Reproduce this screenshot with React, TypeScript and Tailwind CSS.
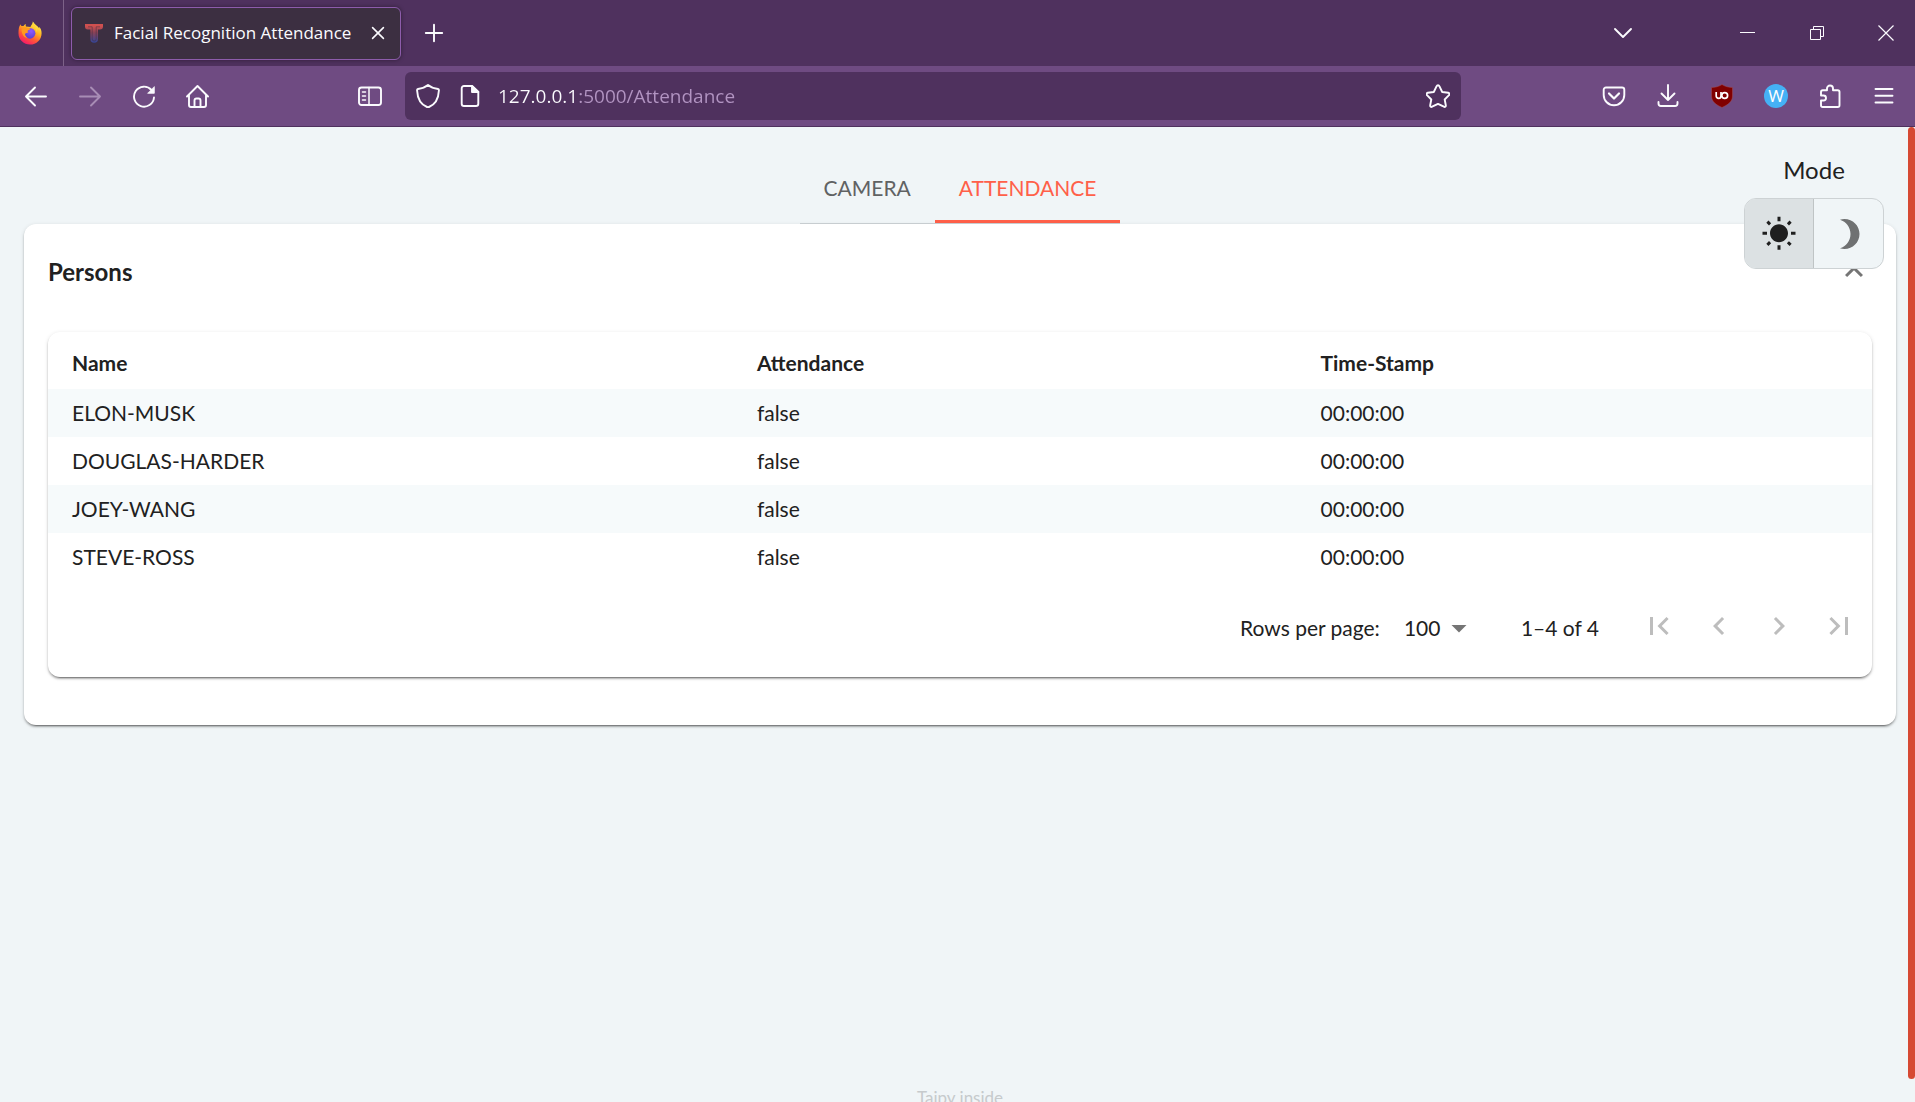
import React, { useState } from "react";

const people = [
  { name: "ELON-MUSK", attendance: "false", time: "00:00:00" },
  { name: "DOUGLAS-HARDER", attendance: "false", time: "00:00:00" },
  { name: "JOEY-WANG", attendance: "false", time: "00:00:00" },
  { name: "STEVE-ROSS", attendance: "false", time: "00:00:00" },
];

type LineProps = { children: React.ReactNode; className?: string };

function Line({ children, className = "size-6" }: LineProps) {
  return (
    <svg
      viewBox="0 0 24 24"
      className={className}
      fill="none"
      stroke="currentColor"
      strokeWidth="1.9"
      strokeLinecap="round"
      strokeLinejoin="round"
      aria-hidden="true"
    >
      {children}
    </svg>
  );
}

function Solid({ d, className = "size-9" }: { d: string; className?: string }) {
  return (
    <svg viewBox="0 0 24 24" className={className} fill="currentColor" aria-hidden="true">
      <path d={d} />
    </svg>
  );
}

function ToolButton({ label, children, disabled }: { label: string; children: React.ReactNode; disabled?: boolean }) {
  return (
    <button
      type="button"
      aria-label={label}
      disabled={disabled}
      className="flex h-12 w-[54px] shrink-0 items-center justify-center rounded-md text-[#fbfbfe] disabled:text-[#a88db5]"
    >
      {children}
    </button>
  );
}

function FirefoxLogo() {
  return (
    <svg viewBox="0 0 24 24" className="size-6" aria-hidden="true">
      <defs>
        <linearGradient id="fx-body" x1="0.8" y1="0.1" x2="0.3" y2="1">
          <stop offset="0" stopColor="#fff44f" />
          <stop offset="0.35" stopColor="#ffb021" />
          <stop offset="0.65" stopColor="#ff5a36" />
          <stop offset="1" stopColor="#f5156c" />
        </linearGradient>
        <radialGradient id="fx-globe" cx="0.6" cy="0.3" r="0.7">
          <stop offset="0" stopColor="#9059ff" />
          <stop offset="1" stopColor="#5b3fd0" />
        </radialGradient>
      </defs>
      <path
        fill="url(#fx-body)"
        d="M14.8.4c.3 1.6-.5 2.7-1.3 3.6-.6.8-1 1.3-1 2L8 5.4C7.600 4.600 7.600 3.700 7.900 3 6.900 3.400 6 4.200 5.500 5c-.8-.1-1.600 0-2 .1C2.900 4.600 2.600 3.800 2.600 3.200 1 5 .4 8.500.5 12.500A11.500 11.300 0 0 0 12 23.600c6.500 0 11.600-5 11.600-11.400 0-2.500-.8-5-2.600-6.400.2.700.3 1.300.3 1.800C20 4.500 16.500 3.600 14.800.4z"
      />
      <circle cx="12" cy="12.300" r="5.400" fill="url(#fx-globe)" />
      <path
        fill="#ff9a1f"
        d="M3.600 8.500C4.800 6 8 5.600 9.600 7c1 .1 2.400.1 2.800.5-.2 1-1.500 1.500-2.600 2-.4 1 .1 1.700.8 2.100-1.600.7-3.400.2-3.600 1.700-.1 1.200 1 2.600 2.600 3.400-3 .5-6-2.800-6-8.200z"
      />
      <path fill="#ffd43a" d="M14.800.4c.3 1.600-.5 2.700-1.300 3.600 2.500 1 4.800 3.600 5 7 1-1.500.8-3 .5-4.500C17.400 4.500 15.600 3 14.800.4z" />
    </svg>
  );
}

function TaipyMark() {
  return (
    <svg viewBox="0 0 24 24" className="size-6" aria-hidden="true">
      <defs>
        <linearGradient id="taipy-mark" x1="0" y1="0" x2="0" y2="1">
          <stop offset="0.1" stopColor="#d0504f" />
          <stop offset="0.45" stopColor="#8a4256" />
          <stop offset="1" stopColor="#33459a" />
        </linearGradient>
      </defs>
      <path fill="url(#taipy-mark)" d="M3 3h18v2.500a3 3 0 0 1-3 3h-2V18a3.800 3.800 0 0 1-7.600 0V8.500H6.300A3 3 0 0 1 3 5.500z" />
      <path fill="none" stroke="#3a3040" strokeWidth="0.500" d="M6 5.800h4.200V18a2 2 0 0 0 4 0V5.800H18" />
    </svg>
  );
}

function TitleBar() {
  return (
    <header className="flex h-[66px] shrink-0 items-center bg-[#4f315e] text-[#fbfbfe]">
      <div className="flex h-full w-16 shrink-0 items-center justify-center border-r border-[#7d6288] pr-1">
        <FirefoxLogo />
      </div>
      <div className="ml-[7px] flex h-[53px] w-[330px] shrink-0 items-center rounded-md border border-[#8d5cab] bg-[#3c2f41] pl-2.5 shadow-[0_0_4px_rgba(0,0,0,0.4)]">
        <TaipyMark />
        <span className="ml-2 flex-1 whitespace-nowrap font-['Open_Sans',sans-serif] text-[17px] leading-6">
          Facial Recognition Attendance
        </span>
        <button type="button" aria-label="Close tab" className="mr-1 flex size-9 items-center justify-center">
          <Line className="size-5">
            <path d="M5.500 5.500l13 13M18.500 5.500l-13 13" />
          </Line>
        </button>
      </div>
      <button type="button" aria-label="New tab" className="ml-[9px] flex size-12 items-center justify-center">
        <Line>
          <path d="M12 3.800v16.400M3.800 12h16.400" />
        </Line>
      </button>
      <div className="flex-1" />
      <button type="button" aria-label="List all tabs" className="mr-[66px] flex size-12 items-center justify-center">
        <Line>
          <path d="M4 8l8 8 8-8" />
        </Line>
      </button>
      <button type="button" aria-label="Minimize" className="flex h-full w-[69px] items-center justify-center">
        <svg viewBox="0 0 16 16" className="size-4" fill="none" stroke="currentColor" aria-hidden="true">
          <path d="M0 7.500h15" />
        </svg>
      </button>
      <button type="button" aria-label="Restore" className="flex h-full w-[69px] items-center justify-center">
        <svg viewBox="0 0 16 16" className="size-4" fill="none" stroke="currentColor" aria-hidden="true">
          <path d="M1.500 4.500h10v10h-10zM4.500 4.500v-3h10v10h-3" />
        </svg>
      </button>
      <button type="button" aria-label="Close" className="flex h-full w-16 items-center justify-center pl-1.5">
        <svg viewBox="0 0 16 16" className="size-4" fill="none" stroke="currentColor" strokeWidth="1.200" aria-hidden="true">
          <path d="M.5.500l15 15M15.500.500l-15 15" />
        </svg>
      </button>
    </header>
  );
}

function NavBar() {
  return (
    <nav
      aria-label="Browser toolbar"
      className="flex h-[61px] shrink-0 items-center border-b border-[#4f315e] bg-[#6f4b82] pl-[9px] pr-1 text-[#fbfbfe]"
    >
      <ToolButton label="Back">
        <Line>
          <path d="M22 12.500H2M11 3.500l-9 9 9 9" />
        </Line>
      </ToolButton>
      <ToolButton label="Forward" disabled>
        <Line>
          <path d="M2 12.500h20M13 3.500l9 9-9 9" />
        </Line>
      </ToolButton>
      <ToolButton label="Reload">
        <Line>
          <path d="M22 13.500A10 10 0 1 1 19.500 6" />
          <path d="M22.300 3v6.300H16z" fill="currentColor" strokeWidth="0.800" />
        </Line>
      </ToolButton>
      <ToolButton label="Home">
        <Line>
          <path d="M1 12.500L11.500 2 22 12.500M3 11v10a2 2 0 0 0 2 2h13a2 2 0 0 0 2-2V11" />
          <path d="M8.500 23v-6.500a2 2 0 0 1 2-2h2a2 2 0 0 1 2 2V23" />
        </Line>
      </ToolButton>
      <div className="w-[118px] shrink-0" />
      <ToolButton label="Sidebars">
        <Line>
          <rect x="1" y="3.500" width="22" height="17.500" rx="2.500" />
          <path d="M11 3.500V21" strokeWidth="1.500" />
          <path d="M4.500 8h3M4.500 12h3M4.500 16h3" strokeWidth="1.500" />
        </Line>
      </ToolButton>
      <div className="ml-2 flex h-12 min-w-0 flex-1 items-center rounded-md bg-[#4f315e] px-[11px]">
        <button type="button" aria-label="Tracking protection">
          <Line>
            <path d="M12 1C9 3.500 5.500 4.500 2 5c-.8.200-1 .800-.9 1.500C1.500 15 5 21 12 23.500 19 21 22.500 15 22.900 6.500 23 5.800 22.800 5.200 22 5 18.500 4.500 15 3.500 12 1z" />
          </Line>
        </button>
        <button type="button" aria-label="Site information" className="ml-[18px]">
          <Line>
            <path d="M14 2H6a2.300 2.300 0 0 0-2.300 2.300v15.400A2.300 2.300 0 0 0 6 22h12a2.300 2.300 0 0 0 2.300-2.300V8z" />
            <path d="M14 2v6h6.300z" fill="currentColor" />
          </Line>
        </button>
        <input
          aria-label="Address"
          type="text"
          defaultValue="127.0.0.1:5000/Attendance"
          className="ml-4 h-9 min-w-0 flex-1 bg-[linear-gradient(to_right,#fbfbfe_80px,#b294c2_80px)] bg-clip-text font-['Open_Sans',sans-serif] text-[19px] text-transparent outline-none"
        />
        <button type="button" aria-label="Bookmark this page">
          <Line>
            <path d="M12 1.300c.7 0 1.200.400 1.500 1L16.200 8l6 .800c1.200.200 1.600 1.500.8 2.300L18.700 15.500l1.100 5.800c.2 1.200-.9 2-1.900 1.400L12 19.900l-5.900 2.800c-1 .600-2.100-.200-1.900-1.400l1.100-5.800L1 11.100c-.8-.800-.4-2.100.8-2.300l6-.800 2.700-5.700c.3-.600.8-1 1.500-1z" />
          </Line>
        </button>
      </div>
      <div className="w-[126px] shrink-0" />
      <ToolButton label="Save to Pocket">
        <Line>
          <path d="M4 3.500h16a2.300 2.300 0 0 1 2.300 2.300V11a10.300 10.300 0 0 1-20.600 0V5.800A2.300 2.300 0 0 1 4 3.500z" />
          <path d="M7 9.500l5 5 5-5" strokeWidth="2.200" />
        </Line>
      </ToolButton>
      <ToolButton label="Downloads">
        <Line>
          <path d="M12 1v15M5.500 9.500L12 16l6.500-6.500M2.500 18v1.500A2.500 2.500 0 0 0 5 22h14a2.500 2.500 0 0 0 2.500-2.500V18" />
        </Line>
      </ToolButton>
      <ToolButton label="uBlock Origin">
        <svg viewBox="0 0 24 24" className="size-6" aria-hidden="true">
          <path fill="#800000" stroke="#a0505a" strokeWidth="0.500" d="M12 .5C9 2.500 5 3.500 1.500 3.500V12c0 6 5 9 10.500 11.500C17.500 21 22.500 18 22.500 12V3.500C19 3.500 15 2.500 12 .5z" />
          <path fill="none" stroke="#fff" strokeWidth="1.700" d="M6.200 8v4a2.400 2.400 0 0 0 2.400 2.400c1.500 0 2.400-1.100 2.400-2.400V8" />
          <circle cx="14.700" cy="11.500" r="2.900" fill="none" stroke="#fff" strokeWidth="1.700" />
        </svg>
      </ToolButton>
      <ToolButton label="Account W">
        <span className="flex size-6 items-center justify-center rounded-full bg-[#45b1f5] font-['Open_Sans',sans-serif] text-[17px] leading-6 text-white">
          W
        </span>
      </ToolButton>
      <ToolButton label="Extensions">
        <Line>
          <path d="M3 9.500V8a1.800 1.800 0 0 1 1.800-1.800h4.200V4.500a3 3 0 0 1 6 0v1.700h4.700A1.800 1.800 0 0 1 21.500 8v13.200a1.800 1.800 0 0 1-1.800 1.800H4.800A1.800 1.800 0 0 1 3 21.200v-4.700h2.500a2.500 2.500 0 0 0 0-5H3z" />
        </Line>
      </ToolButton>
      <ToolButton label="Open application menu">
        <Line>
          <path d="M3.500 5h17M3.500 11.800h17M3.500 18.500h17" />
        </Line>
      </ToolButton>
    </nav>
  );
}

function Tabs() {
  return (
    <div className="flex justify-center">
      <div className="flex border-b border-[#cdd3d6] text-[21px] leading-6">
        <a href="#camera" className="px-6 pb-[23px] pt-[49px] text-[#606263]">
          CAMERA
        </a>
        <a
          href="#attendance"
          aria-current="page"
          className="border-b-[3px] border-[#ff6049] px-6 pb-5 pt-[49px] text-[#ff6049]"
        >
          ATTENDANCE
        </a>
      </div>
    </div>
  );
}

function ModeSwitch() {
  const [mode, setMode] = useState("light");
  const base = "flex h-[69px] w-[69px] items-center justify-center";
  return (
    <div className="absolute right-6 top-[27px] flex flex-col items-center">
      <span id="mode-label" className="text-2xl leading-8">
        Mode
      </span>
      <div
        role="group"
        aria-labelledby="mode-label"
        className="mt-3 flex overflow-hidden rounded-xl border border-[#cdd2d4] bg-[#f0f5f7]"
      >
        <button
          type="button"
          aria-label="Light"
          aria-pressed={mode === "light"}
          onClick={() => setMode("light")}
          className={`${base} border-r border-[#bfc4c5] text-[#1f1f1f] aria-pressed:bg-[#dce1e3]`}
        >
          <Solid d="m6.760 4.840-1.800-1.790-1.410 1.410 1.790 1.790 1.420-1.410zM4 10.500H1v2h3v-2zm9-9.950h-2V3.500h2V.55zm7.450 3.910-1.410-1.410-1.790 1.790 1.410 1.410 1.790-1.790zm-3.210 13.700 1.790 1.800 1.410-1.410-1.800-1.790-1.400 1.400zM20 10.500v2h3v-2h-3zm-8-5c-3.310 0-6 2.690-6 6s2.690 6 6 6 6-2.690 6-6-2.690-6-6-6zm-1 16.950h2V19.500h-2v2.950zm-7.450-3.910 1.410 1.410 1.790-1.800-1.410-1.410-1.790 1.800z" />
        </button>
        <button
          type="button"
          aria-label="Dark"
          aria-pressed={mode === "dark"}
          onClick={() => setMode("dark")}
          className={`${base} text-[#6f7172] aria-pressed:bg-[#dce1e3]`}
        >
          <Solid d="M9 2c-1.050 0-2.050.160-3 .460 4.060 1.270 7 5.060 7 9.540s-2.940 8.270-7 9.540c.950.300 1.950.460 3 .460 5.520 0 10-4.480 10-10S14.520 2 9 2z" />
        </button>
      </div>
    </div>
  );
}

const pagers = [
  { label: "First page", d: "M18.410 16.590L13.820 12l4.590-4.590L17 6l-6 6 6 6zM6 6h2v12H6z" },
  { label: "Previous page", d: "M15.410 7.410L14 6l-6 6 6 6 1.410-1.410L10.830 12z" },
  { label: "Next page", d: "M10 6L8.590 7.410 13.170 12l-4.580 4.590L10 18l6-6z" },
  { label: "Last page", d: "M5.590 7.410L10.180 12l-4.590 4.590L7 18l6-6-6-6zM16 6h2v12h-2z" },
];

function Pagination() {
  return (
    <div className="flex h-[78px] items-center justify-end pr-[3px]">
      <label htmlFor="rows-per-page">Rows per page:</label>
      <div className="relative ml-6 flex items-center">
        <select id="rows-per-page" defaultValue="100" className="h-9 w-[73px] appearance-none bg-transparent outline-none">
          <option>50</option>
          <option>100</option>
          <option>500</option>
        </select>
        <Solid d="M7 10l5 5 5-5z" className="pointer-events-none absolute right-0 size-9 text-[#757575]" />
      </div>
      <span className="ml-11">1–4 of 4</span>
      <div className="ml-[30px] flex">
        {pagers.map((p) => (
          <button key={p.label} type="button" aria-label={p.label} disabled className="px-3 pb-4 pt-3 text-[#bdbdbd]">
            <Solid d={p.d} />
          </button>
        ))}
      </div>
    </div>
  );
}

const paper =
  "rounded-xl bg-white shadow-[0_3px_1px_-2px_rgba(0,0,0,0.3),0_2px_2px_0_rgba(0,0,0,0.24),0_1px_4px_0_rgba(0,0,0,0.12)]";

function PersonsTable() {
  return (
    <div className={`${paper} pb-2.5 text-[21px] leading-6`}>
      <table className="w-full table-fixed text-left">
        <colgroup>
          <col className="w-[37.550%]" />
          <col className="w-[30.900%]" />
          <col />
        </colgroup>
        <thead>
          <tr className="h-[57px]">
            <th className="px-6 pt-1 font-bold">Name</th>
            <th className="px-6 pt-1 font-bold">Attendance</th>
            <th className="px-6 pt-1 font-bold">Time-Stamp</th>
          </tr>
        </thead>
        <tbody>
          {people.map((p) => (
            <tr key={p.name} className="h-12 odd:bg-[#f6fafb]">
              <td className="px-6">{p.name}</td>
              <td className="px-6">{p.attendance}</td>
              <td className="px-6">{p.time}</td>
            </tr>
          ))}
        </tbody>
      </table>
      <div className="h-2" />
      <Pagination />
    </div>
  );
}

export default function App() {
  const [open, setOpen] = useState(true);
  return (
    <div className="flex h-screen flex-col overflow-hidden bg-[#f0f5f7] font-[Lato,sans-serif] text-[#212121]">
      <TitleBar />
      <NavBar />
      <div className="flex min-h-0 flex-1">
        <main className="relative flex min-w-0 flex-1 flex-col pl-6 pr-3">
          <Tabs />
          <section className={`${paper} px-6 ${open ? "pb-12" : ""}`}>
            <button
              type="button"
              aria-expanded={open}
              onClick={() => setOpen(!open)}
              className="flex h-24 w-full items-center justify-between text-2xl font-bold"
            >
              Persons
              <Solid
                d="M12 8l-6 6 1.410 1.410L12 10.830l4.590 4.580L18 14z"
                className="size-9 text-[#757575]"
              />
            </button>
            {open && (
              <div className="pt-3">
                <PersonsTable />
              </div>
            )}
          </section>
          <footer className="-mb-2 mt-auto text-center text-[17px] leading-6 text-[#c6cacc]">Taipy inside</footer>
          <ModeSwitch />
        </main>
        <div className="w-[7px] shrink-0 pb-[23px]">
          <div className="h-full rounded-full bg-[#d64933]" />
        </div>
      </div>
    </div>
  );
}
